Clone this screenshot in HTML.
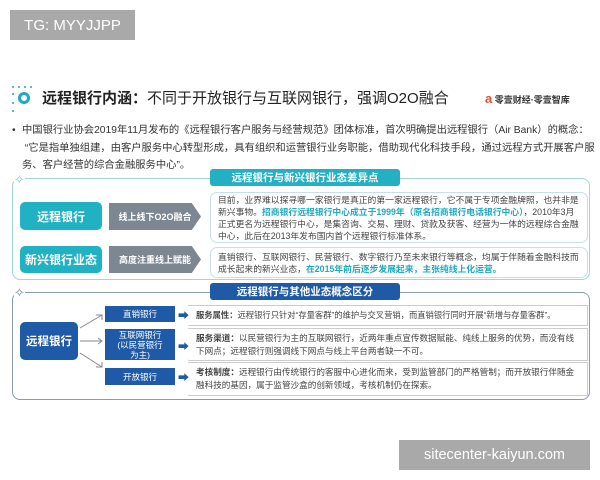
<!DOCTYPE html>
<html><head><meta charset="utf-8"><style>
*{margin:0;padding:0;box-sizing:border-box}
body{width:600px;height:480px;background:#fff;font-family:"Liberation Sans","Noto Sans CJK SC",sans-serif;position:relative;overflow:hidden;color:#333}
.a{position:absolute}
.tag{background:#a9a9a9;color:#fff;font-size:15px;display:flex;align-items:center;justify-content:center}
.t{font-size:10.3px;line-height:17.5px;color:#333;white-space:nowrap}
.btn{color:#fff;display:flex;align-items:center;justify-content:center;font-weight:bold;border-radius:5px}
.gray{background:#7d8791;color:#fff;font-size:9px;font-weight:bold;display:flex;align-items:center;justify-content:center;clip-path:polygon(0 0,90% 0,100% 50%,90% 100%,0 100%)}
.box{border:1px solid #c9dfe3;border-radius:7px;padding:1px 7px;font-size:8.8px;line-height:12px;color:#444}
.hl{color:#1eaabf;font-weight:bold}
.bb{background:#1f5aa6;color:#fff;font-size:8.5px;display:flex;align-items:center;justify-content:center;text-align:center;line-height:10px}
.pb{border:1px solid #ccc;font-size:8.6px;line-height:13px;padding:3px 7px;color:#444;clip-path:polygon(0 0,100% 0,100% 100%,0 100%,2% 50%)}
.ar{color:#1f5aa6;font-size:11px}
</style></head><body>
<div class="a tag" style="left:10px;top:10px;width:125px;height:30px">TG: MYYJJPP</div>
<div class="a tag" style="left:399px;top:440px;width:191px;height:30px;font-size:14.5px">sitecenter-kaiyun.com</div>

<svg class="a" style="left:10px;top:84px" width="26" height="32"><g fill="#1eaabf"><circle cx="3" cy="3" r="1"/><circle cx="9" cy="3" r="1"/><circle cx="15" cy="3" r="1"/><circle cx="21" cy="3" r="1"/><circle cx="3" cy="10" r="1"/><circle cx="3" cy="19" r="1"/><circle cx="3" cy="27" r="1"/></g><circle cx="14" cy="14" r="4.5" fill="none" stroke="#1eaabf" stroke-width="3"/></svg>
<div class="a" style="left:42px;top:87px;font-size:15px;white-space:nowrap;color:#222"><b>远程银行内涵：</b>不同于开放银行与互联网银行，强调O2O融合</div>
<div class="a" style="left:485px;top:91px;font-size:9px;font-weight:bold;color:#333;white-space:nowrap"><span style="color:#e8502a;font-size:13px">a</span> 零壹财经·零壹智库</div>

<div class="a t" style="left:12px;top:122px">•</div>
<div class="a t" style="left:22px;top:122px">中国银行业协会2019年11月发布的《远程银行客户服务与经营规范》团体标准，首次明确提出远程银行（Air Bank）的概念：<br>&nbsp;“它是指单独组建，由客户服务中心转型形成，具有组织和运营银行业务职能，借助现代化科技手段，通过远程方式开展客户服<br>务、客户经营的综合金融服务中心”。</div>

<!-- section 1 -->
<div class="a" style="left:12px;top:178px;width:578px;height:102px;border:1px solid #9fd5dd;border-radius:8px"></div>
<div class="a" style="left:14px;top:172px;font-size:13px;color:#8cc;background:#fff">✧</div>
<div class="a" style="left:210px;top:169px;width:190px;height:17px;background:#22b0c2;color:#fff;font-size:10.5px;font-weight:bold;display:flex;align-items:center;justify-content:center;border-radius:3px">远程银行与新兴银行业态差异点</div>
<div class="a btn" style="left:20px;top:202px;width:82px;height:28px;background:#20b1c3;font-size:12px">远程银行</div>
<div class="a gray" style="left:109px;top:203px;width:92px;height:27px">线上线下O2O融合</div>
<div class="a box" style="left:210px;top:192px;width:378px;height:51px">目前，业界难以探寻哪一家银行是真正的第一家远程银行，它不属于专项金融牌照，也并非是新兴事物。<span class="hl">招商银行远程银行中心成立于1999年（原名招商银行电话银行中心）</span>，2010年3月正式更名为远程银行中心，是集咨询、交易、理财、贷款及获客、经营为一体的远程综合金融中心，此后在2013年发布国内首个远程银行标准体系。</div>
<div class="a btn" style="left:20px;top:246px;width:82px;height:27px;background:#20b1c3;font-size:12px">新兴银行业态</div>
<div class="a gray" style="left:109px;top:246px;width:92px;height:27px">高度注重线上赋能</div>
<div class="a box" style="left:210px;top:247px;width:378px;height:31px;padding-top:3px">直销银行、互联网银行、民营银行、数字银行乃至未来银行等概念，均属于伴随着金融科技而成长起来的新兴业态，<span class="hl">在2015年前后逐步发展起来，主张纯线上化运营。</span></div>

<!-- section 2 -->
<div class="a" style="left:12px;top:292px;width:578px;height:108px;border:1px solid #8a9ab0;border-radius:8px"></div>
<div class="a" style="left:14px;top:285px;font-size:13px;color:#789;background:#fff">✧</div>
<div class="a" style="left:210px;top:283px;width:190px;height:17px;background:#1f5aa6;color:#fff;font-size:10.5px;font-weight:bold;display:flex;align-items:center;justify-content:center;border-radius:3px">远程银行与其他业态概念区分</div>
<div class="a btn" style="left:20px;top:322px;width:58px;height:38px;background:#1f5aa6;font-size:11.5px">远程银行</div>
<svg class="a" style="left:78px;top:305px" width="30" height="80"><g stroke="#888" fill="none"><path d="M2 23L24 10M18 10h6v5"/><path d="M2 36h22M20 33l4 3-4 3"/><path d="M2 48L24 62M18 62h6v-5"/></g></svg>
<div class="a bb" style="left:105px;top:306px;width:70px;height:16px">直销银行</div>
<div class="a bb" style="left:105px;top:329px;width:70px;height:31px">互联网银行<br>(以民营银行<br>为主)</div>
<div class="a bb" style="left:105px;top:368px;width:70px;height:17px">开放银行</div>
<div class="a ar" style="left:178px;top:307px">➡</div>
<div class="a ar" style="left:178px;top:338px">➡</div>
<div class="a ar" style="left:178px;top:369px">➡</div>
<div class="a pb" style="left:188px;top:305px;width:400px;height:21px;white-space:nowrap;font-size:8.3px"><b>服务属性：</b>远程银行只针对“存量客群”的维护与交叉营销，而直销银行同时开展“新增与存量客群”。</div>
<div class="a pb" style="left:188px;top:328px;width:400px;height:33px"><b>服务渠道：</b>以民营银行为主的互联网银行，近两年重点宣传数据赋能、纯线上服务的优势，而没有线下网点；远程银行则强调线下网点与线上平台两者缺一不可。</div>
<div class="a pb" style="left:188px;top:362px;width:400px;height:34px"><b>考核制度：</b>远程银行由传统银行的客服中心进化而来，受到监管部门的严格管制；而开放银行伴随金融科技的基因，属于监管沙盒的创新领域，考核机制仍在探索。</div>
</body></html>
